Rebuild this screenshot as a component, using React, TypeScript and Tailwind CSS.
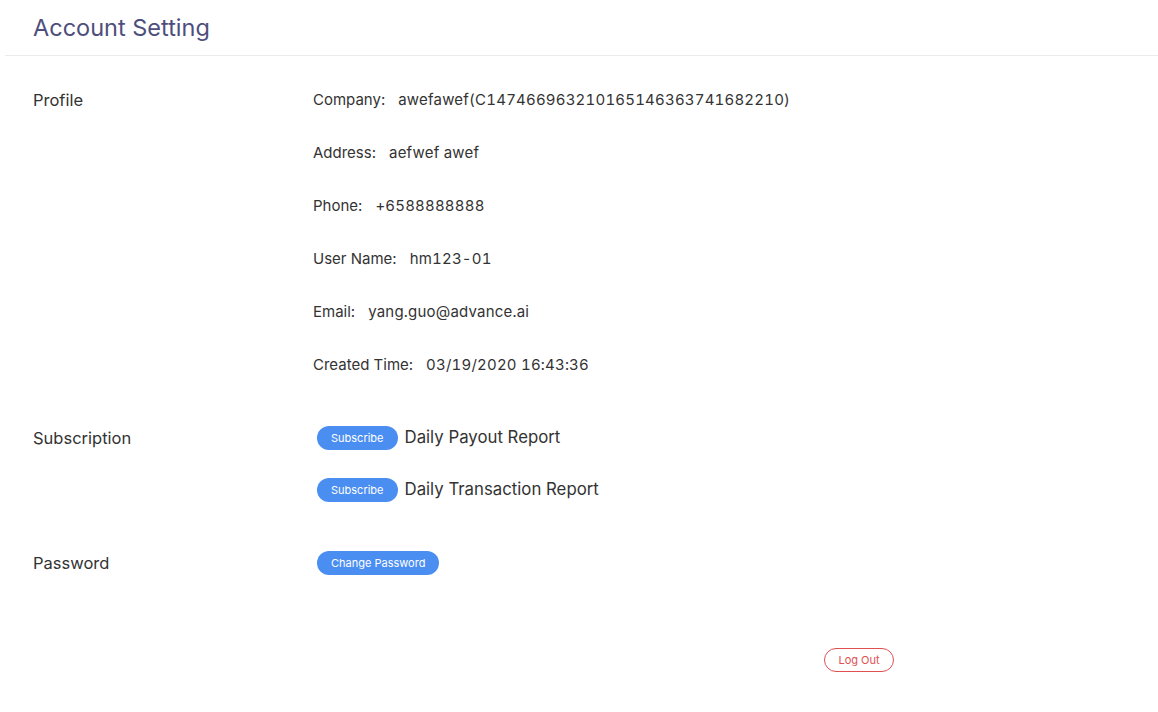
import { ReactElement } from 'react'

const profile = [
	['Company:', 'awefawef(C147466963210165146363741682210)'],
	['Address:', 'aefwef awef'],
	['Phone:', '+6588888888'],
	['User Name:', 'hm123-01'],
	['Email:', 'yang.guo@advance.ai'],
	['Created Time:', '03/19/2020 16:43:36'],
]

const reports = ['Daily Payout Report', 'Daily Transaction Report']

const BlueButton = ({ children }: { children: string }): ReactElement => (
	<button className="h-6 rounded-full bg-[#4b8ef2] px-[14px] text-[11px] text-white leading-6">
		{children}
	</button>
)

const App = (): ReactElement => {
	return (
		<div className="min-h-[712px] bg-white text-[#333] font-['Inter',sans-serif]">
			<div className="ml-[5px] h-[56px] border-b border-[#ebebeb] pl-7 pt-[12px]">
				<h1 className="text-[23.5px] leading-8 text-[#4e4e7c]">Account Setting</h1>
			</div>

			<div className="pl-[33px] pt-[31px]">
				<div className="flex">
					<div className="w-[280px] text-[16.5px] leading-[26px]">Profile</div>
					<div className="flex flex-col gap-[27px]">
						{profile.map(([label, value]) => (
							<div key={label} className="text-[15px] leading-[26px]">
								<span>{label}</span>
								<span className="ml-[13px] tabular-nums tracking-[0.2px]">{value}</span>
							</div>
						))}
					</div>
				</div>

				<div className="mt-[47px] flex">
					<div className="w-[280px] text-[16.5px] leading-[26px]">Subscription</div>
					<div className="flex flex-col gap-[26px]">
						{reports.map((r) => (
							<div key={r} className="flex h-[26px] items-center gap-[7px] pl-1">
								<BlueButton>Subscribe</BlueButton>
								<span className="text-[16.8px]">{r}</span>
							</div>
						))}
					</div>
				</div>

				<div className="mt-[47px] flex">
					<div className="w-[280px] text-[16.5px] leading-[26px]">Password</div>
					<div className="flex h-[26px] items-center pl-1">
						<BlueButton>Change Password</BlueButton>
					</div>
				</div>

				<div className="mt-[72px] flex pl-[791px]">
					<button className="h-6 w-[70px] rounded-full border border-[#e05050] text-[11px] text-[#e05050]">
						Log Out
					</button>
				</div>
			</div>
		</div>
	)
}

export default App
